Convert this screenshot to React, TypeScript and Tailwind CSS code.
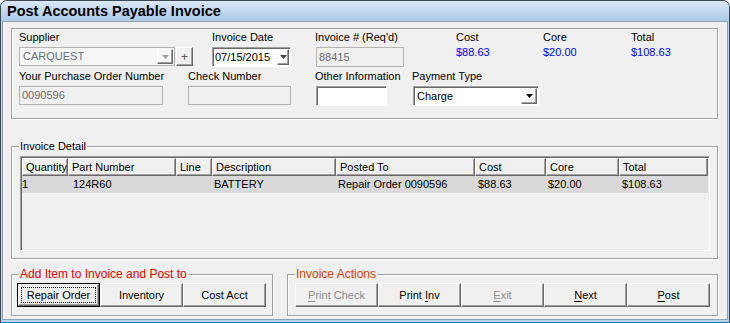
import React from "react";

const raised =
  "border border-t-white border-l-white border-r-[#696969] border-b-[#696969] shadow-[inset_-1px_-1px_0_#a0a0a0]";
const sunken =
  "border border-t-[#a0a0a0] border-l-[#a0a0a0] border-r-white border-b-white shadow-[inset_1px_1px_0_#696969]";
const etched =
  "relative border border-[#a0a0a0] shadow-[inset_1px_1px_0_#ffffff,1px_1px_0_#ffffff]";

function Arrow({ color }: { color: string }) {
  return (
    <svg width="7" height="4" viewBox="0 0 7 4">
      <path d="M0 0h7L3.5 4z" fill={color} />
    </svg>
  );
}

function Label({ children }: { children: React.ReactNode }) {
  return <div className="h-[13px] leading-[13px] whitespace-nowrap">{children}</div>;
}

function Btn({
  children,
  disabled,
  focused,
}: {
  children: React.ReactNode;
  disabled?: boolean;
  focused?: boolean;
}) {
  if (focused) {
    return (
      <div className="w-[83px] h-[24px] border border-black">
        <div className={`relative h-full w-full flex items-center justify-center ${raised}`}>
          <span className="absolute inset-[2px] border border-dotted border-black" />
          <span>{children}</span>
        </div>
      </div>
    );
  }
  return (
    <div
      className={`w-[83px] h-[24px] flex items-center justify-center ${raised} ${
        disabled ? "text-[#8d8d8d]" : "text-black"
      }`}
    >
      <span className="whitespace-pre">{children}</span>
    </div>
  );
}

const cols = [
  { name: "Quantity", w: "w-[46px]", val: "1", pad: "pl-[0px]" },
  { name: "Part Number", w: "w-[108px]", val: "124R60", pad: "pl-[5px]" },
  { name: "Line", w: "w-[36px]", val: "", pad: "pl-[2px]" },
  { name: "Description", w: "w-[124px]", val: "BATTERY", pad: "pl-[2px]" },
  { name: "Posted To", w: "w-[139px]", val: "Repair Order 0090596", pad: "pl-[2px]" },
  { name: "Cost", w: "w-[71px]", val: "$88.63", pad: "pl-[3px]" },
  { name: "Core", w: "w-[73px]", val: "$20.00", pad: "pl-[2px]" },
  { name: "Total", w: "w-[89px]", val: "$108.63", pad: "pl-[3px]" },
];

export default function App() {
  return (
    <div className="w-[730px] h-[323px] flex flex-col overflow-hidden rounded-t-[7px] border border-[#3f4954] border-b-[#1a7cc4] bg-[#bad2ea] font-['Liberation_Sans',Arial,sans-serif] text-[11px] text-black">
      {/* title bar */}
      <div className="h-[20px] shrink-0 flex items-center pl-[6px] bg-gradient-to-b from-[#dce9f6] to-[#a9c8e8] text-[14.5px] font-bold leading-none">
        Post Accounts Payable Invoice
      </div>

      {/* client area */}
      <div className="flex-1 mx-[1px] mb-[2px] bg-[#f0f0f0] border border-[#8fa3b8] flex flex-col">
        {/* header panel */}
        <div className={`${etched} mt-[6px] ml-[8px] w-[707px] h-[91px] pt-[2px] pl-[7px]`}>
          <div className="flex">
            <div className="w-[193px]">
              <Label>Supplier</Label>
              <div className="mt-[3px] flex">
                <div className="w-[156px] h-[19px] border border-[#b4b4b4] bg-[#f7f7f7] flex items-center justify-between">
                  <span className="pl-[3px] text-[#6d6d6d]">CARQUEST</span>
                  <div className={`w-[16px] h-[15px] mr-[1px] flex items-center justify-center ${raised}`}>
                    <Arrow color="#a0a0a0" />
                  </div>
                </div>
                <div className={`ml-[1px] w-[17px] h-[19px] flex items-center justify-center text-[12px] text-[#555] ${raised}`}>
                  +
                </div>
              </div>
            </div>
            <div className="w-[103px]">
              <Label>Invoice Date</Label>
              <div className={`mt-[3px] w-[79px] h-[20px] bg-white flex items-center justify-between ${sunken}`}>
                <span className="pl-[2px]">07/15/2015</span>
                <div className={`w-[12px] h-[16px] mr-[1px] flex items-center justify-center ${raised}`}>
                  <Arrow color="#444" />
                </div>
              </div>
            </div>
            <div className="w-[141px]">
              <Label>Invoice # (Req'd)</Label>
              <div className="mt-[3px] ml-[1px] w-[88px] h-[20px] border border-[#b4b4b4] bg-[#f0f0f0] flex items-center">
                <span className="pl-[2px] text-[#6d6d6d]">88415</span>
              </div>
            </div>
            <div className="w-[87px]">
              <Label>Cost</Label>
              <div className="mt-[2px] h-[13px] leading-[13px] text-[#0000ff]">$88.63</div>
            </div>
            <div className="w-[88px]">
              <Label>Core</Label>
              <div className="mt-[2px] h-[13px] leading-[13px] text-[#0000ff]">$20.00</div>
            </div>
            <div>
              <Label>Total</Label>
              <div className="mt-[2px] h-[13px] leading-[13px] text-[#0000ff]">$108.63</div>
            </div>
          </div>

          <div className="flex mt-[3px]">
            <div className="w-[169px]">
              <Label>Your Purchase Order Number</Label>
              <div className="mt-[3px] w-[144px] h-[19px] border border-[#b4b4b4] bg-[#f0f0f0] flex items-center">
                <span className="pl-[2px] text-[#6d6d6d]">0090596</span>
              </div>
            </div>
            <div className="w-[127px]">
              <Label>Check Number</Label>
              <div className="mt-[3px] w-[103px] h-[19px] border border-[#b4b4b4] bg-[#f0f0f0]" />
            </div>
            <div className="w-[97px]">
              <Label>Other Information</Label>
              <div className={`mt-[3px] ml-[1px] w-[71px] h-[20px] bg-white ${sunken}`} />
            </div>
            <div>
              <Label>Payment Type</Label>
              <div className={`mt-[3px] ml-[1px] w-[126px] h-[20px] bg-white flex items-center justify-between ${sunken}`}>
                <span className="pl-[3px]">Charge</span>
                <div className={`w-[16px] h-[16px] mr-[1px] flex items-center justify-center ${raised}`}>
                  <Arrow color="#000" />
                </div>
              </div>
            </div>
          </div>
        </div>

        {/* invoice detail */}
        <div className={`${etched} mt-[27px] ml-[8px] w-[707px] h-[113px] pt-[9px] pl-[8px]`}>
          <span className="absolute left-[7px] top-[-7px] px-[1px] bg-[#f0f0f0] leading-[13px]">
            Invoice Detail
          </span>
          <div className={`w-[690px] h-[95px] bg-[#f0f0f0] ${sunken}`}>
            <div className="flex ml-[1px] mt-[1px]">
              {cols.map((c) => (
                <div
                  key={c.name}
                  className={`${c.w} h-[18px] flex items-center pl-[3px] whitespace-nowrap ${raised}`}
                >
                  {c.name}
                </div>
              ))}
            </div>
            <div className="flex ml-[1px] h-[17px] bg-[#d9d9d9] w-[686px]">
              {cols.map((c) => (
                <div key={c.name} className={`${c.w} flex items-center ${c.pad} whitespace-nowrap`}>
                  {c.val}
                </div>
              ))}
            </div>
          </div>
        </div>

        {/* bottom actions */}
        <div className="flex mt-[15px] ml-[8px]">
          <div className={`${etched} w-[262px] h-[42px] pt-[8px] pl-[5px]`}>
            <span className="absolute left-[7px] top-[-7px] px-[1px] bg-[#f0f0f0] leading-[13px] text-[12px] text-[#e00000]">
              Add Item to Invoice and Post to
            </span>
            <div className="flex">
              <Btn focused>Repair Order</Btn>
              <Btn>Inventory</Btn>
              <Btn>Cost Acct</Btn>
            </div>
          </div>
          <div className={`${etched} ml-[14px] w-[431px] h-[42px] pt-[8px] pl-[7px]`}>
            <span className="absolute left-[7px] top-[-7px] px-[1px] bg-[#f0f0f0] leading-[13px] text-[12px] text-[#d04000]">
              Invoice Actions
            </span>
            <div className="flex">
              <Btn disabled>
                <u className="underline-offset-2">P</u>rint Check
              </Btn>
              <Btn>
                {"Print "}
                <u className="underline-offset-2">I</u>nv
              </Btn>
              <Btn disabled>
                <u className="underline-offset-2">E</u>xit
              </Btn>
              <Btn>
                <u className="underline-offset-2">N</u>ext
              </Btn>
              <Btn>
                <u className="underline-offset-2">P</u>ost
              </Btn>
            </div>
          </div>
        </div>
      </div>
    </div>
  );
}
